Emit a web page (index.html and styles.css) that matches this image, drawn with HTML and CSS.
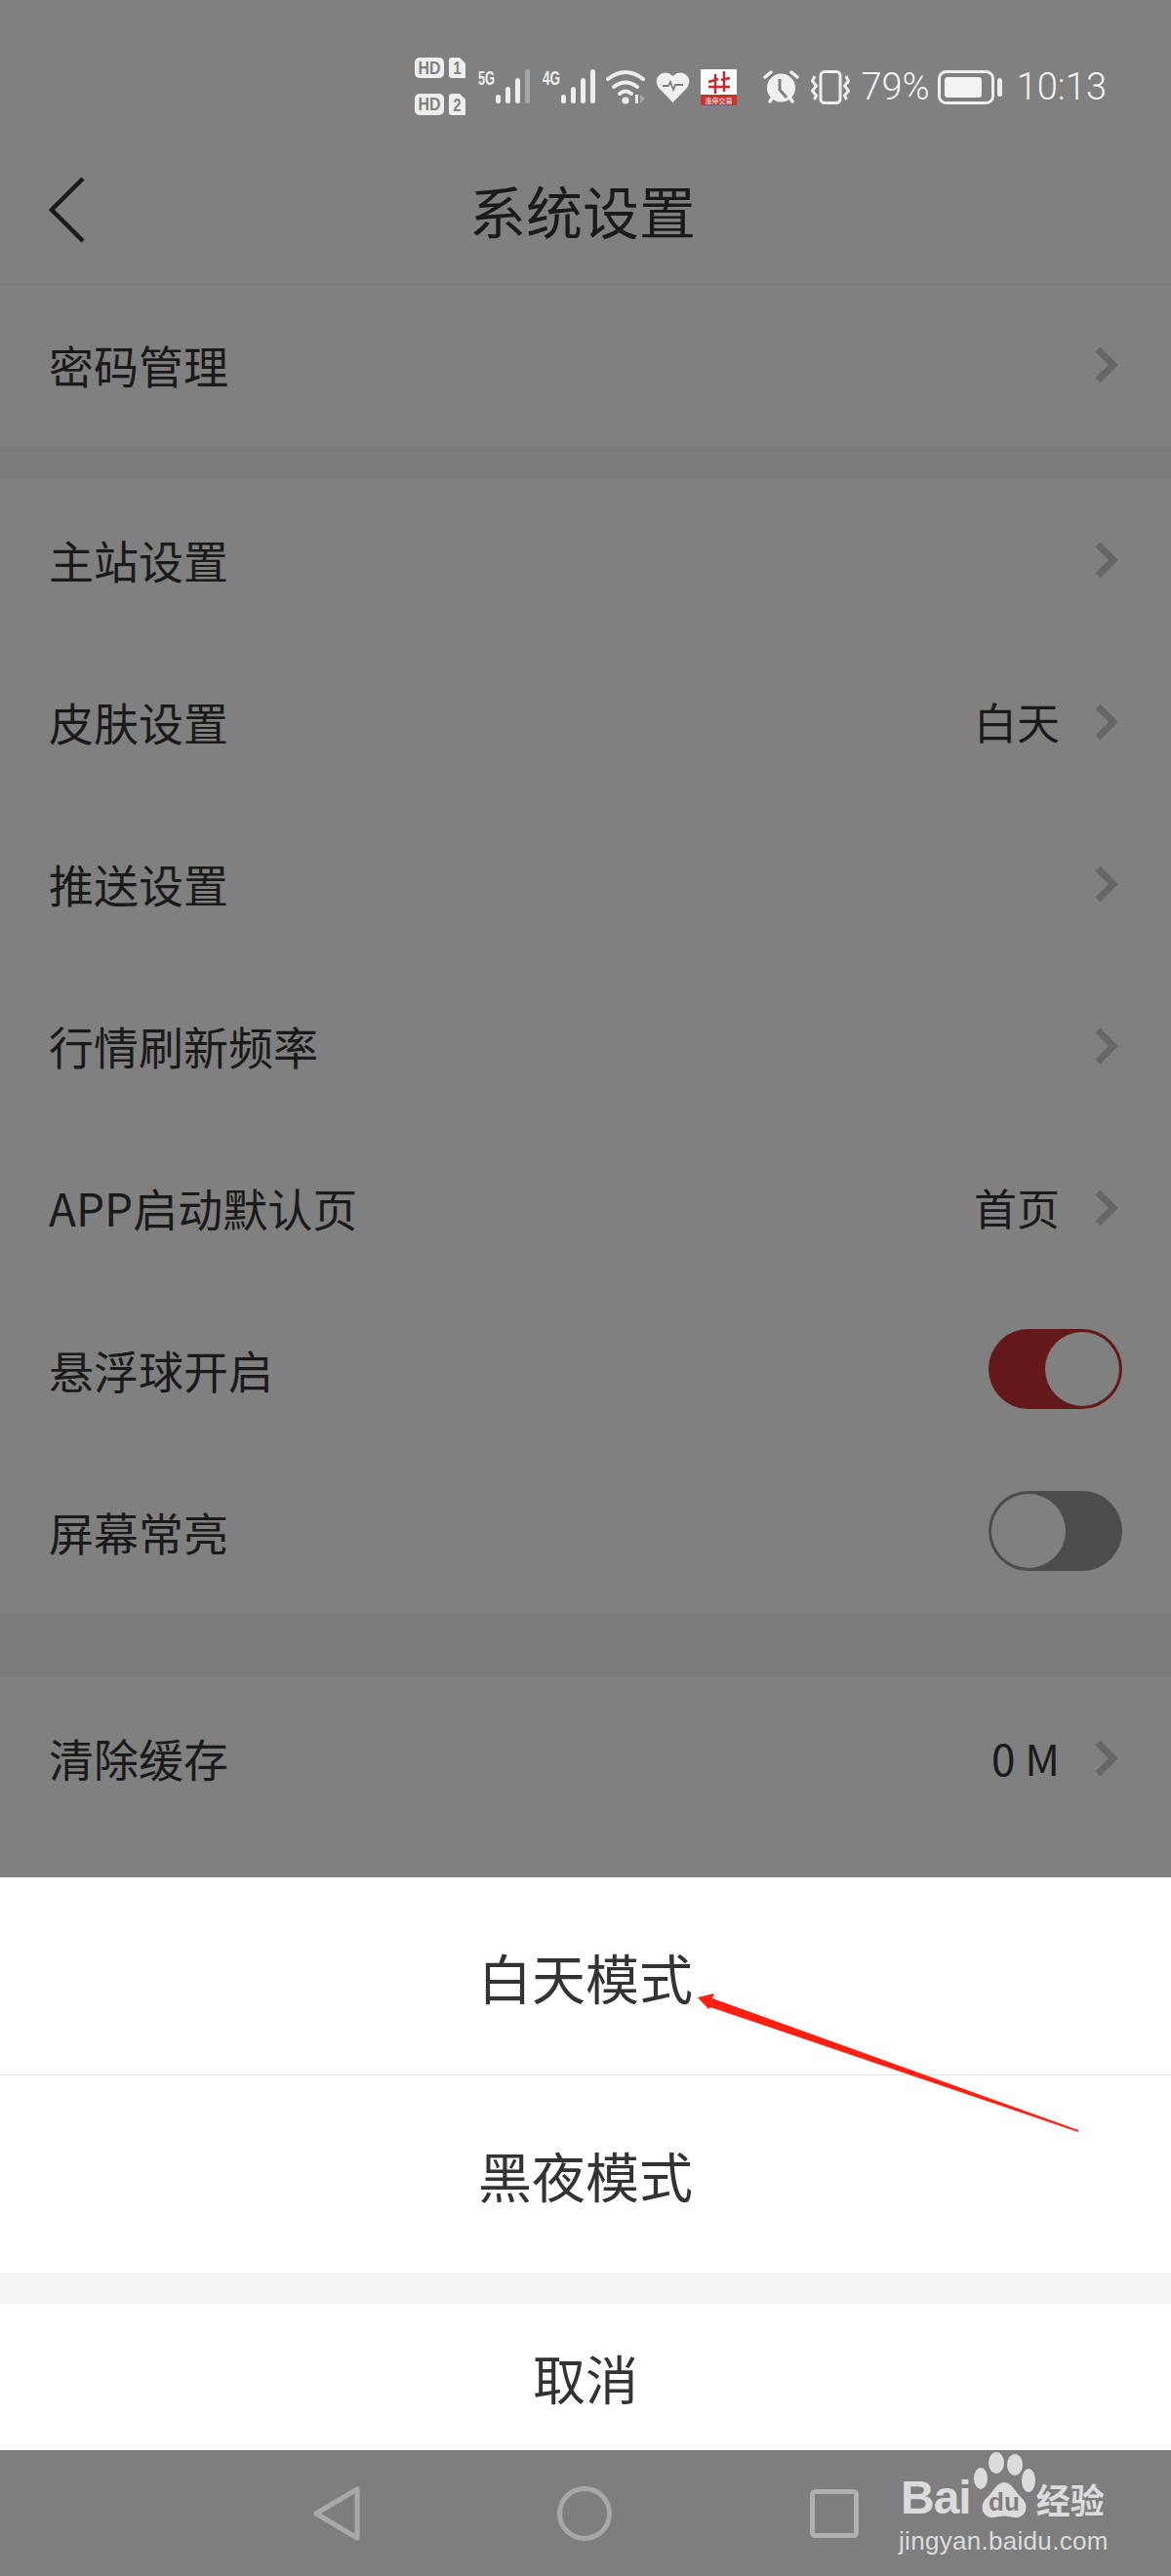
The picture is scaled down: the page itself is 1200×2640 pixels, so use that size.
FILE: index.html
```html
<!DOCTYPE html>
<html lang="zh-CN">
<head>
    <meta charset="UTF-8">
    <meta name="viewport" content="width=device-width, initial-scale=1.0">
    <title>系统设置</title>
    <link rel="stylesheet" href="styles.css">
</head>
<body>
    <div class="screen">
        <!-- Status bar -->
        <div class="status-bar">
            <svg class="st-icon" width="52" height="60" viewBox="0 0 52 60">
                <rect x="0" y="0" width="30" height="21" rx="5" fill="#eee"/>
                <text x="15" y="17" class="st-hd" textLength="23" lengthAdjust="spacingAndGlyphs">HD</text>
                <path d="M38 0h8l6 6v15h-14q-3 0-3-3v-15q0-3 3-3z" fill="#eee"/>
                <text x="43.500" y="17" class="st-hd" textLength="8" lengthAdjust="spacingAndGlyphs">1</text>
                <rect x="0" y="37" width="30" height="22" rx="5" fill="#eee"/>
                <text x="15" y="54" class="st-hd" textLength="23" lengthAdjust="spacingAndGlyphs">HD</text>
                <path d="M38 37h8l6 6v16h-14q-3 0-3-3v-16q0-3 3-3z" fill="#eee"/>
                <text x="43.500" y="55" class="st-hd" textLength="8" lengthAdjust="spacingAndGlyphs">2</text>
            </svg>
            <svg class="st-icon st-gap-13" width="54" height="44" viewBox="0 -4 54 44">
                <text x="0" y="16" class="st-net" textLength="17" lengthAdjust="spacingAndGlyphs">5G</text>
                <g fill="#eee">
                    <rect x="18" y="26" width="5" height="9" rx="2.500"/>
                    <rect x="28" y="18" width="5" height="17" rx="2.500"/>
                    <rect x="38" y="9" width="5" height="26" rx="2.500"/>
                </g>
                <rect x="48" y="0" width="5" height="35" rx="2.500" fill="#a6a6a6"/>
            </svg>
            <svg class="st-icon st-gap-12" width="55" height="44" viewBox="0 -4 55 44">
                <text x="0" y="16" class="st-net" textLength="18" lengthAdjust="spacingAndGlyphs">4G</text>
                <g fill="#eee">
                    <rect x="19" y="26" width="5" height="9" rx="2.500"/>
                    <rect x="29" y="18" width="5" height="17" rx="2.500"/>
                    <rect x="39" y="9" width="5" height="26" rx="2.500"/>
                    <rect x="49" y="0" width="5" height="35" rx="2.500"/>
                </g>
            </svg>
            <svg class="st-icon" width="41" height="36" viewBox="0 0 41 36">
                <g fill="none" stroke="#eee" stroke-width="4" stroke-linecap="round">
                    <path d="M2 10q18-14 36 0"/>
                    <path d="M8 18q12-9 24 0"/>
                    <path d="M14 25q6-5 12 0"/>
                </g>
                <circle cx="20" cy="32" r="3.600" fill="#eee"/>
                <rect x="30" y="26" width="3" height="9" fill="#eee"/>
                <path d="M35 26l5 4-5 5z" fill="#a6a6a6"/>
            </svg>
            <svg class="st-icon" width="35" height="32" viewBox="0 0 35 32">
                <path d="M17.500 32L3 17Q-2 9 4 3.500Q11-1 17.500 5Q24-1 31 3.500Q37 9 32 17z" fill="#f0f0f0"/>
                <path d="M7 15h6l2-4 3 8 2-5h8" fill="none" stroke="#808080" stroke-width="1.800"/>
            </svg>
            <svg class="st-icon st-gap-11" width="37" height="37" viewBox="0 0 37 37">
                <rect width="37" height="37" fill="#fff"/>
                <rect y="26" width="37" height="11" fill="#cf2f2f"/>
                <g fill="none" stroke="#c9282d" stroke-width="2.500">
                    <path d="M8 13l10-3M8 18h22M21 11l9-2"/>
                    <path d="M15 5v20M24 2v21"/>
                </g>
                <text x="18.500" y="35" class="st-app">涨停交易</text>
            </svg>
            <svg class="st-icon st-gap-27" width="37" height="34" viewBox="0 0 37 34">
                <circle cx="18.500" cy="18" r="14.500" fill="#f0f0f0"/>
                <path d="M17 9v11l7 8" fill="none" stroke="#808080" stroke-width="3"/>
                <g fill="none" stroke="#f0f0f0" stroke-width="3.500" stroke-linecap="round">
                    <path d="M2 7l6-5"/>
                    <path d="M35 7l-6-5"/>
                    <path d="M7 32l2-3"/>
                    <path d="M30 32l-2-3"/>
                </g>
            </svg>
            <svg class="st-icon st-gap-12" width="40" height="35" viewBox="0 0 40 35">
                <rect x="10" y="1.500" width="20" height="32" rx="4" fill="none" stroke="#eee" stroke-width="3"/>
                <g fill="none" stroke="#eee" stroke-width="3">
                    <path d="M4 6l-2.500 5 4 5-4 5 4 5-2 4"/>
                    <path d="M36 6l2.500 5-4 5 4 5-4 5 2 4"/>
                </g>
            </svg>
            <span class="st-text st-gap-10">79%</span>
            <svg class="st-icon st-gap-8" width="66" height="35" viewBox="0 0 66 35">
                <rect x="1.500" y="1.500" width="55" height="32" rx="7" fill="none" stroke="#eee" stroke-width="3"/>
                <rect x="7" y="7" width="38" height="21" rx="3" fill="#f2f2f2"/>
                <rect x="61" y="8" width="5" height="19" rx="2.500" fill="#eee"/>
            </svg>
            <span class="st-text st-gap-15">10:13</span>
        </div>

        <!-- Header -->
        <div class="header">
            <svg class="back-icon" width="38" height="68" viewBox="0 0 38 68">
                <path d="M35 2L3 34l32 32" fill="none" stroke="#1a1a1a" stroke-width="4.500"/>
            </svg>
            <h1 class="page-title">系统设置</h1>
        </div>

        <!-- Settings list -->
        <div class="row">
            <span class="row-label">密码管理</span>
            <svg class="chevron" width="24" height="38" viewBox="0 0 24 38"><path d="M3 3l16 16-16 16" fill="none" stroke="#666" stroke-width="7"/></svg>
        </div>
        <div class="gap gap-small"></div>
        <div class="row">
            <span class="row-label">主站设置</span>
            <svg class="chevron" width="24" height="38" viewBox="0 0 24 38"><path d="M3 3l16 16-16 16" fill="none" stroke="#666" stroke-width="7"/></svg>
        </div>
        <div class="row">
            <span class="row-label">皮肤设置</span>
            <span class="row-value">白天</span>
            <svg class="chevron" width="24" height="38" viewBox="0 0 24 38"><path d="M3 3l16 16-16 16" fill="none" stroke="#666" stroke-width="7"/></svg>
        </div>
        <div class="row">
            <span class="row-label">推送设置</span>
            <svg class="chevron" width="24" height="38" viewBox="0 0 24 38"><path d="M3 3l16 16-16 16" fill="none" stroke="#666" stroke-width="7"/></svg>
        </div>
        <div class="row">
            <span class="row-label">行情刷新频率</span>
            <svg class="chevron" width="24" height="38" viewBox="0 0 24 38"><path d="M3 3l16 16-16 16" fill="none" stroke="#666" stroke-width="7"/></svg>
        </div>
        <div class="row">
            <span class="row-label">APP启动默认页</span>
            <span class="row-value">首页</span>
            <svg class="chevron" width="24" height="38" viewBox="0 0 24 38"><path d="M3 3l16 16-16 16" fill="none" stroke="#666" stroke-width="7"/></svg>
        </div>
        <div class="row">
            <span class="row-label">悬浮球开启</span>
            <div class="toggle toggle-on"><div class="toggle-knob"></div></div>
        </div>
        <div class="row">
            <span class="row-label">屏幕常亮</span>
            <div class="toggle toggle-off"><div class="toggle-knob"></div></div>
        </div>
        <div class="gap gap-large"></div>
        <div class="row">
            <span class="row-label">清除缓存</span>
            <span class="row-value">0 M</span>
            <svg class="chevron" width="24" height="38" viewBox="0 0 24 38"><path d="M3 3l16 16-16 16" fill="none" stroke="#666" stroke-width="7"/></svg>
        </div>
        <div class="list-end"></div>

        <!-- Bottom sheet -->
        <div class="sheet">
            <div class="sheet-item sheet-item--line">白天模式</div>
            <div class="sheet-item">黑夜模式</div>
            <div class="sheet-gap"></div>
            <div class="sheet-cancel">取消</div>
        </div>

        <!-- Nav bar -->
        <div class="nav-bar">
            <svg class="nav-back" width="48" height="56" viewBox="0 0 48 56">
                <path d="M45 3v50L3 28z" fill="none" stroke="#a8a8a8" stroke-width="5" stroke-linejoin="round"/>
            </svg>
            <svg class="nav-home" width="56" height="56" viewBox="0 0 56 56">
                <circle cx="28" cy="28" r="25.500" fill="none" stroke="#a8a8a8" stroke-width="5"/>
            </svg>
            <svg class="nav-recent" width="50" height="50" viewBox="0 0 50 50">
                <rect x="2.500" y="2.500" width="45" height="45" rx="3" fill="none" stroke="#b0b0b0" stroke-width="5"/>
            </svg>
        </div>

        <!-- Red arrow drawn over the sheet -->
        <svg class="arrow" width="400" height="150" viewBox="0 0 400 150">
            <polygon points="5,7 22,3 20,8 395,143 395,145 18,17 16,19" fill="#ff2012"/>
        </svg>

        <!-- Watermark -->
        <div class="watermark">
            <div class="wm-top">
                <span class="wm-bai">Bai</span>
                <svg class="wm-paw" width="64" height="68" viewBox="0 0 64 68">
                    <g fill="#dcdcdc">
                        <ellipse cx="8" cy="27" rx="7" ry="11"/>
                        <ellipse cx="24" cy="11" rx="8" ry="11"/>
                        <ellipse cx="43" cy="13" rx="8" ry="11"/>
                        <ellipse cx="57" cy="29" rx="7" ry="12"/>
                        <path d="M32 31C24 31 20 42 13 48C6 56 10 68 22 67Q32 64 42 67C54 68 58 56 51 48C44 42 40 31 32 31z"/>
                    </g>
                    <text x="32" y="60" class="wm-du">du</text>
                </svg>
                <span class="wm-cn">经验</span>
            </div>
            <div class="wm-url">jingyan.baidu.com</div>
        </div>
    </div>
</body>
</html>
```

FILE: styles.css
```css
* {
    margin: 0;
    padding: 0;
    box-sizing: border-box;
}

body {
    font-family: "Noto Sans CJK SC", "Noto Sans", sans-serif;
    background: #808080;
    color: #1a1a1a;
}

.screen {
    position: relative;
    width: 1200px;
    height: 2640px;
    overflow: hidden;
    display: flex;
    flex-direction: column;
    background: #808080;
}

/* Status bar */
.status-bar {
    height: 140px;
    padding: 38px 66px 0 0;
    display: flex;
    justify-content: flex-end;
    align-items: center;
    gap: 10px;
}

.st-icon {
    flex: none;
}

.st-gap-8 { margin-left: -2px; }
.st-gap-10 { margin-left: 1px; }
.st-gap-11 { margin-left: 1px; }
.st-gap-12 { margin-left: 2px; }
.st-gap-13 { margin-left: 3px; }
.st-gap-15 { margin-left: 5px; }
.st-gap-27 { margin-left: 17px; }

.st-hd {
    font-family: "Liberation Sans", sans-serif;
    font-size: 18px;
    font-weight: bold;
    fill: #808080;
    text-anchor: middle;
}

.st-net {
    font-family: "Liberation Sans", sans-serif;
    font-size: 20px;
    font-weight: bold;
    fill: #eee;
}

.st-app {
    font-size: 7px;
    fill: #fff;
    text-anchor: middle;
}

.st-text {
    font-family: Roboto, sans-serif;
    font-size: 38px;
    font-weight: 300;
    line-height: 38px;
    color: #f2f2f2;
}

/* Header */
.header {
    position: relative;
    height: 151px;
    display: flex;
    align-items: center;
    justify-content: center;
    border-bottom: 1px solid #767676;
}

.back-icon {
    position: absolute;
    left: 50px;
    top: 41px;
}

.page-title {
    font-size: 58px;
    font-weight: 400;
    line-height: 1;
    margin: 0 6px 0 0;
}

/* Rows */
.row {
    height: 166px;
    flex: none;
    padding: 0 54px 0 50px;
    display: flex;
    align-items: center;
}

.row-label {
    font-size: 46px;
    line-height: 1;
    flex: 1;
    margin-top: -3px;
}

.row-value {
    font-size: 44px;
    line-height: 1;
    margin-right: 36px;
    margin-top: -3px;
}

.chevron {
    flex: none;
}

.gap {
    flex: none;
    background: #7b7b7b;
}

.gap-small { height: 34px; }
.gap-large { height: 66px; }

.list-end {
    flex: none;
    height: 39px;
}

/* Toggles */
.toggle {
    width: 137px;
    height: 82px;
    border-radius: 41px;
    margin-right: -4px;
    margin-top: -3px;
    display: flex;
    align-items: center;
    padding: 0 3px;
}

.toggle-on {
    background: #651818;
    justify-content: flex-end;
}

.toggle-off {
    background: #4c4c4c;
    justify-content: flex-start;
}

.toggle-knob {
    width: 76px;
    height: 76px;
    border-radius: 50%;
    background: #808080;
}

/* Bottom sheet */
.sheet {
    flex: none;
    background: #fff;
}

.sheet-item {
    height: 202px;
    display: flex;
    align-items: center;
    justify-content: center;
    font-size: 55px;
    color: #333;
}

.sheet-item--line {
    height: 203px;
    border-bottom: 1px solid #e2e2e2;
}

.sheet-gap {
    height: 32px;
    background: #f5f5f5;
}

.sheet-cancel {
    height: 150px;
    display: flex;
    align-items: center;
    justify-content: center;
    font-size: 54px;
    color: #333;
}

/* Nav bar */
.nav-bar {
    flex: 1;
    position: relative;
    background: #7e7e7e;
}

.nav-back {
    position: absolute;
    left: 321px;
    top: 37px;
}

.nav-home {
    position: absolute;
    left: 571px;
    top: 37px;
}

.nav-recent {
    position: absolute;
    left: 830px;
    top: 40px;
}

/* Red arrow */
.arrow {
    position: absolute;
    left: 710px;
    top: 2040px;
}

/* Watermark */
.watermark {
    position: absolute;
    left: 921px;
    top: 2513px;
    width: 216px;
    color: #dcdcdc;
}

.wm-top {
    display: flex;
    align-items: flex-end;
    height: 68px;
    white-space: nowrap;
}

.wm-bai {
    font-family: "Liberation Sans", sans-serif;
    font-size: 48px;
    font-weight: bold;
    line-height: 42px;
    letter-spacing: -1px;
    margin: 0 2px;
}

.wm-paw {
    flex: none;
}

.wm-du {
    font-family: "Liberation Sans", sans-serif;
    font-size: 26px;
    font-weight: bold;
    fill: #7e7e7e;
    text-anchor: middle;
}

.wm-cn {
    font-size: 35px;
    font-weight: 700;
    line-height: 40px;
    margin-left: 1px;
}

.wm-url {
    font-family: "Liberation Sans", sans-serif;
    font-size: 26px;
    line-height: 32px;
    letter-spacing: 0.3px;
    margin-top: 7px;
    white-space: nowrap;
}
```
